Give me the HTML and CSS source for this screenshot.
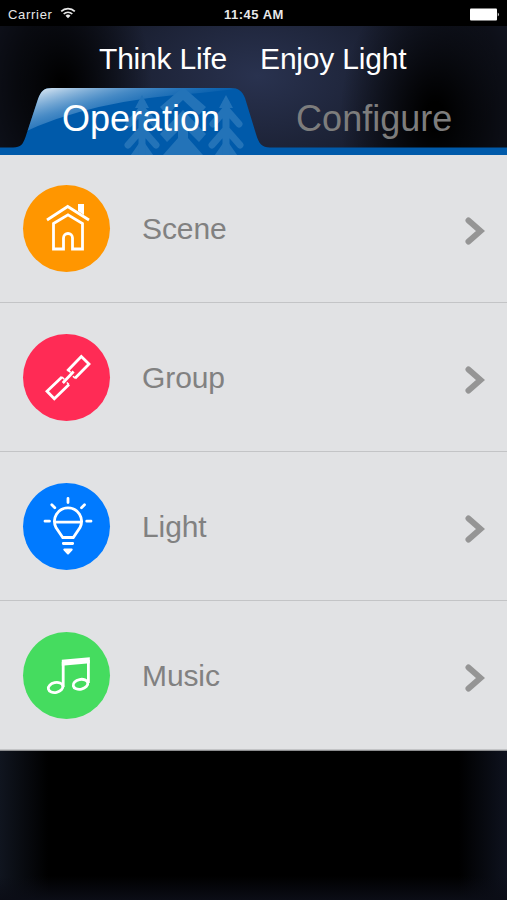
FILE: index.html
```html
<!DOCTYPE html>
<html lang="en">
<head>
  <meta charset="UTF-8" />
  <meta name="viewport" content="width=device-width, initial-scale=1" />
  <title>Think Life Enjoy Light</title>
  <link rel="stylesheet" href="styles.css">
</head>
<body>
  <div class="status-bar">
    <div class="carrier">
      <span>Carrier</span>
      <svg class="wifi" width="16" height="12" viewBox="0 0 16 12">
        <path d="M1.2 4.4a9.6 9.6 0 0 1 13.6 0M3.7 7a6.1 6.1 0 0 1 8.6 0" fill="none" stroke="#e8e8e8" stroke-width="1.7" />
        <path d="M8 11.3L5.500 8.8a3.6 3.6 0 0 1 5 0z" fill="#e8e8e8" />
      </svg>
    </div>
    <span class="clock">11:45 AM</span>
    <svg class="battery" width="30" height="13" viewBox="0 0 30 13">
      <rect x="0" y="0.5" width="27" height="12" rx="1" fill="#fff" />
      <path d="M27.8 4.5q2 2 0 4z" fill="#fff" />
    </svg>
  </div>

  <header>
    <h1><span>Think Life</span><span>Enjoy Light</span></h1>
    <nav>
      <svg class="tab-shape" width="507" height="67" viewBox="0 0 507 67">
        <defs>
          <linearGradient id="gloss" x1="0.1" y1="0" x2="0.75" y2="0.45">
            <stop offset="0" stop-color="#fff" stop-opacity="0.85" />
            <stop offset="0.45" stop-color="#9cc4e6" stop-opacity="0.45" />
            <stop offset="1" stop-color="#4d93d0" stop-opacity="0" />
          </linearGradient>
          <clipPath id="tab">
            <path d="M0 59.500H13C21 59.500 23 56 25.500 49L38 11C41 3 44 0 52 0H230C239 0 242 3 245 10L256 46C259 56 262 59.500 270 59.500H507V67H0z" />
          </clipPath>
          <g id="tree">
            <path d="M0 0L7 13H-7zM0 44L16 67H-16z" />
            <path d="M0 8V62M-13 29L0 14L13 29M-14 50L0 34L14 50" fill="none" stroke="#2373b8" stroke-width="7" stroke-linecap="round" />
          </g>
        </defs>
        <g clip-path="url(#tab)">
          <rect width="507" height="67" fill="#005aaa" />
          <path d="M20 46Q90 12 200 5L245 0H20z" fill="url(#gloss)" />
          <g fill="#2373b8">
            <use href="#tree" x="142" y="7" />
            <path d="M183 -1L206 19L199 27L183 12L167 27L160 19zM183 22L206 46L199 54L188 43V50L203 67H163L178 50V43L167 54L160 46z" />
            <use href="#tree" x="226" y="7" />
          </g>
        </g>
      </svg>
      <a href="#" class="tab active">Operation</a>
      <a href="#" class="tab">Configure</a>
    </nav>
  </header>

  <main>
    <a href="#" class="row">
      <svg class="icon scene" viewBox="0 0 87 87">
        <path d="M24 35L44.700 21.500L66 35M30.500 38.500L45 29.800L59.500 38.500V64H49.500V53A4.500 4.500 0 0 0 40.500 53V64H30.500z" />
        <path d="M55 19h6v11l-6-4z" class="solid" />
      </svg>
      <span class="label">Scene</span>
      <svg class="chevron" viewBox="0 0 20 28"><path d="M3.500 3.500L15.500 14L3.500 24.500" /></svg>
    </a>
    <a href="#" class="row">
      <svg class="icon group" viewBox="0 0 87 87">
        <path d="M44.300 37L58.300 22.500L66 30L52 44.300M39 43L24 57.300L31.300 64.800L46 50.500M39.800 49L50.600 37.500" />
        <path d="M45.500 35.800L47.500 38.500M52 44.300L50 42.300M39 43L41.200 45.200M46 50.500L43.800 48.500" class="hook" />
      </svg>
      <span class="label">Group</span>
      <svg class="chevron" viewBox="0 0 20 28"><path d="M3.500 3.500L15.500 14L3.500 24.500" /></svg>
    </a>
    <a href="#" class="row">
      <svg class="icon light" viewBox="0 0 87 87">
        <path d="M39.700 54.500L33 44.500A13.500 13.500 0 1 1 57 44.500L50.300 54.500zM32 39.200H58" />
        <path d="M40.300 60.500H49.700M45 15.500V19.500M28.800 21.700L31.800 24.700M61.500 21.700L58.500 24.700M22 38.200H26.500M63.700 38.200H68" class="ray" />
        <path d="M41.300 66.500H48.700L45 70.500z" class="solid tip" />
      </svg>
      <span class="label">Light</span>
      <svg class="chevron" viewBox="0 0 20 28"><path d="M3.500 3.500L15.500 14L3.500 24.500" /></svg>
    </a>
    <a href="#" class="row">
      <svg class="icon music" viewBox="0 0 87 87">
        <path d="M40.200 30V55M65.400 28V51" />
        <path d="M38.800 27.800L66.800 25.200V31.200L38.800 33.800z" class="solid" />
        <ellipse cx="32.600" cy="55.500" rx="7.400" ry="4.900" transform="rotate(-12 32.600 55.500)" />
        <ellipse cx="57.500" cy="52.300" rx="7.400" ry="4.900" transform="rotate(-12 57.500 52.300)" />
      </svg>
      <span class="label">Music</span>
      <svg class="chevron" viewBox="0 0 20 28"><path d="M3.500 3.500L15.500 14L3.500 24.500" /></svg>
    </a>
  </main>
</body>
</html>
```
FILE: styles.css
```css
* { box-sizing: border-box; margin: 0; padding: 0; }
body {
  font-family: "Liberation Sans", Arial, sans-serif;
  min-height: 900px;
  background:
    linear-gradient(to top, #0b0d16, transparent 24px),
    linear-gradient(to right, #10151f, transparent 48px, transparent 459px, #0e121e),
    #000;
}
a {
  color: inherit;
  text-decoration: none;
}
.status-bar {
  height: 26px;
  padding: 2px 7px 0 8px;
  display: grid;
  grid-template-columns: 216px auto 1fr;
  align-items: center;
  background: #000;
  color: #e8e8e8;
  font-size: 13px;
}
.carrier {
  display: flex;
  align-items: center;
  gap: 7px;
  letter-spacing: 0.7px;
}
.wifi {
  transform: translateY(-1px);
}
.clock {
  font-weight: 700;
  letter-spacing: 0.5px;
}
.battery {
  justify-self: end;
}
header {
  height: 128px;
  background:
    radial-gradient(ellipse 95px 140px at 435px 90px, #000 10%, transparent),
    radial-gradient(ellipse 90px 130px at 62px 60px, #000 5%, transparent),
    radial-gradient(ellipse 240px 150px at 258px 50px, #29324f, #10131e);
}
h1 {
  height: 62px;
  padding: 15px 0 0 99px;
  display: flex;
  gap: 33px;
  font-size: 30px;
  line-height: 36px;
  font-weight: 400;
  letter-spacing: -0.2px;
  color: #fff;
}
nav {
  position: relative;
  height: 66px;
  padding-left: 62px;
  display: flex;
  gap: 76px;
}
/* tab artwork lies behind the two labels */
.tab-shape {
  position: absolute;
  left: 0;
  top: 0;
}
.tab {
  position: relative;
  font-size: 36px;
  line-height: 61px;
  color: #7d7d7d;
}
.tab.active {
  color: #fff;
}
main {
  background: #e1e2e4;
  border-bottom: 1px solid #8c8d8f;
}
.row {
  height: 149px;
  padding: 0 22px 0 23px;
  display: flex;
  align-items: center;
  border-bottom: 1px solid #c3c4c6;
}
.icon {
  width: 87px;
  height: 87px;
  border-radius: 50%;
  fill: none;
  stroke: #fff;
  stroke-width: 2.8;
}
.icon .solid {
  fill: #fff;
  stroke: none;
}
.icon .ray {
  stroke-linecap: round;
}
.icon .hook {
  stroke-width: 1.6;
}
.icon .tip {
  stroke: #fff;
  stroke-width: 2;
  stroke-linejoin: round;
}
.scene { background: #ff9600; }
.group { background: #ff2b55; }
.light { background: #007aff; }
.music { background: #45dc5f; }
.label {
  flex: 1;
  padding: 2px 0 0 32px;
  font-size: 30px;
  letter-spacing: -0.1px;
  color: #818181;
}
.chevron {
  width: 20px;
  height: 28px;
  margin-top: 5px;
  fill: none;
  stroke: #959595;
  stroke-width: 6;
  stroke-linecap: round;
}
```
